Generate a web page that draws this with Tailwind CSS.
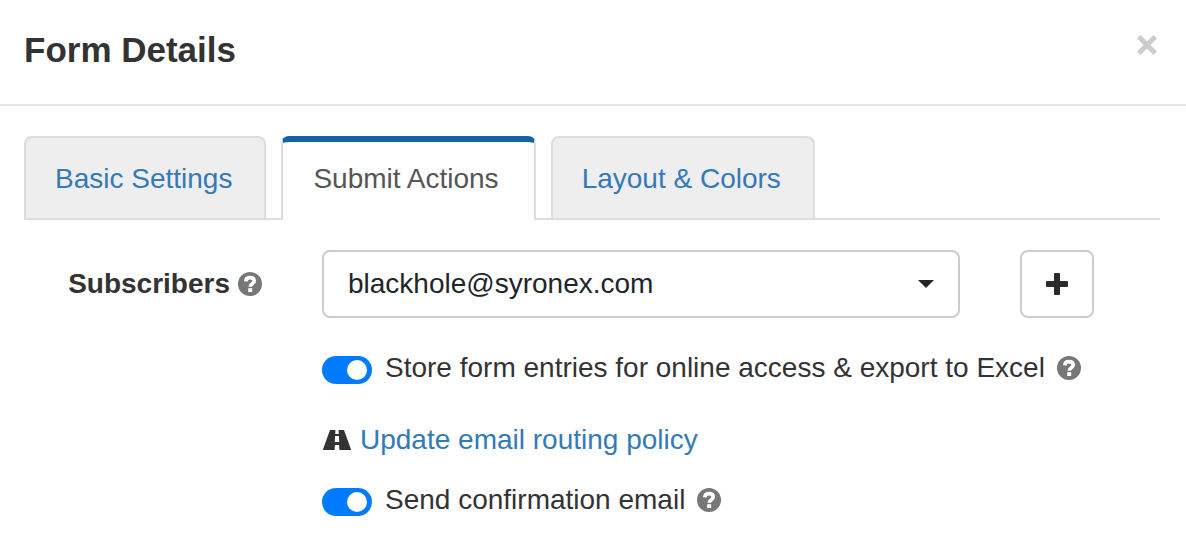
<!DOCTYPE html>
<html lang="en">
<head>
<meta charset="utf-8">
<meta name="viewport" content="width=device-width, initial-scale=1">
<title>Form Details</title>
<script src="https://cdn.jsdelivr.net/npm/@tailwindcss/browser@4"></script>
</head>
<body class="bg-white font-['Liberation_Sans',Arial,sans-serif] text-[28px] leading-10 text-[#333]">
<svg class="hidden" aria-hidden="true">
  <symbol id="help" viewBox="0 0 24 24">
    <circle cx="12" cy="12" r="12" fill="#777"/>
    <path d="M7.8 9.3C8 6.7 9.6 5.6 12 5.6C14.6 5.6 16.2 6.8 16.2 9C16.2 11.6 12.2 11.8 12.2 14.8" fill="none" stroke="#fff" stroke-width="3.7"/>
    <path d="M10.2 16.2h4v3.8h-4z" fill="#fff"/>
  </symbol>
</svg>
<header class="flex items-start justify-between border-b-2 border-[#e5e5e5] px-6 pt-[30px] pb-[34px]">
  <h1 class="text-[35px] leading-10 font-bold">Form Details</h1>
  <button type="button" aria-label="Close" class="mt-0.5 mr-0.5 p-0.5 text-[#ccc]">
    <svg class="size-[22px]" viewBox="0 0 22 22" fill="none" stroke="currentColor" stroke-width="5"><path d="M2.8 2.8l16.4 16.4M19.2 2.8L2.8 19.2"/></svg>
  </button>
</header>
<main class="px-6 pt-[30px]">
  <nav class="mr-0.5 flex items-end gap-[15px] border-b-2 border-[#ddd] leading-10" aria-label="Form settings">
    <a href="#basic" class="rounded-t-lg border-2 border-b-0 border-[#ddd] bg-[#eee] pt-[21px] pr-8 pb-[19px] pl-[29px] whitespace-nowrap text-[#337ab7]">Basic Settings</a>
    <a href="#submit" aria-current="page" class="-mb-0.5 rounded-t-lg border-x-2 border-t-[6px] border-x-[#ddd] border-t-[#1660a7] bg-white pt-[17px] pr-[35px] pb-[21px] pl-[30px] whitespace-nowrap text-[#555]">Submit Actions</a>
    <a href="#layout" class="rounded-t-lg border-2 border-b-0 border-[#ddd] bg-[#eee] pt-[21px] pr-8 pb-[19px] pl-[29px] whitespace-nowrap text-[#337ab7]">Layout &amp; Colors</a>
  </nav>
  <form class="grid grid-cols-[238px_1fr] gap-x-[60px] pt-[30px]">
    <div class="flex h-[68px] items-center justify-end gap-2">
      <label for="subscribers" class="font-bold">Subscribers</label>
      <svg class="size-6 shrink-0" role="img" aria-label="Help"><use href="#help"/></svg>
    </div>
    <div class="flex gap-[60px] pr-[68px]">
      <div class="relative flex-1">
        <select id="subscribers" class="h-[68px] w-full appearance-none rounded-lg border-2 border-[#ccc] bg-white px-6 text-[#212529]">
          <option>blackhole@syronex.com</option>
        </select>
        <svg class="pointer-events-none absolute top-[30px] right-[26px] h-2 w-4" viewBox="0 0 16 8" fill="#212529"><path d="M0 0h16L8 8z"/></svg>
      </div>
      <button type="button" aria-label="Add subscriber" class="flex h-[68px] w-[74px] items-center justify-center rounded-lg border-2 border-[#ccc] bg-white text-[#292b2c]">
        <svg class="size-[22px]" viewBox="0 0 22 22" fill="currentColor"><path d="M9 0h4a1 1 0 0 1 1 1v7h7a1 1 0 0 1 1 1v4a1 1 0 0 1-1 1h-7v7a1 1 0 0 1-1 1H9a1 1 0 0 1-1-1v-7H1a1 1 0 0 1-1-1V9a1 1 0 0 1 1-1h7V1a1 1 0 0 1 1-1z"/></svg>
      </button>
    </div>
    <div class="col-start-2 pt-[30px]">
      <div class="flex items-center">
        <input id="store" type="checkbox" checked class="mt-1 mr-[13px] flex h-7 w-[50px] shrink-0 appearance-none items-center rounded-full bg-gray-300 px-[5px] before:size-5 before:rounded-full before:bg-white checked:justify-end checked:bg-[#007bff]">
        <label for="store">Store form entries for online access &amp; export to Excel</label>
        <svg class="ml-3 size-6 shrink-0" role="img" aria-label="Help"><use href="#help"/></svg>
      </div>
      <div class="mt-8 flex items-center gap-2">
        <svg class="h-5 w-[30px] shrink-0" viewBox="0 0 30 20" fill="#333"><path fill-rule="evenodd" d="M8 0H13.4L13.2 4H16.8L16.6 0H22L29.2 20H17.4L17.1 15H12.9L12.6 20H.8zM13.1 6L12.8 12H17.2L16.9 6z"/></svg>
        <a href="#routing" class="text-[#337ab7]">Update email routing policy</a>
      </div>
      <div class="mt-5 flex items-center">
        <input id="confirm" type="checkbox" checked class="mt-1 mr-[13px] flex h-7 w-[50px] shrink-0 appearance-none items-center rounded-full bg-gray-300 px-[5px] before:size-5 before:rounded-full before:bg-white checked:justify-end checked:bg-[#007bff]">
        <label for="confirm">Send confirmation email</label>
        <svg class="ml-3 size-6 shrink-0" role="img" aria-label="Help"><use href="#help"/></svg>
      </div>
    </div>
  </form>
</main>
</body>
</html>
